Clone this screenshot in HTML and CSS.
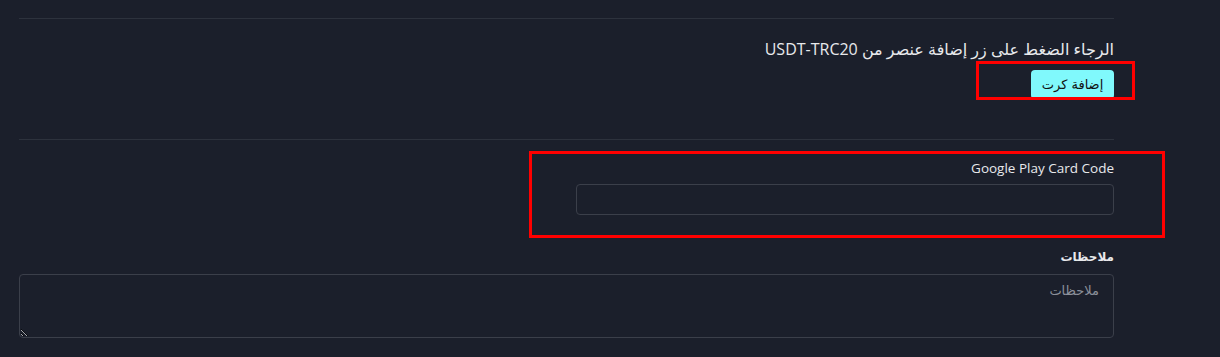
FILE: index.html
```html
<!DOCTYPE html>
<html lang="ar" dir="rtl">
<head>
  <meta charset="UTF-8">
  <title>إضافة كرت</title>
  <link rel="stylesheet" href="styles.css">
</head>
<body>
  <div class="wrap">
    <hr class="line">
    <div class="notice">
      <p class="notice-text">الرجاء الضغط على زر إضافة عنصر من USDT-TRC20</p>
      <div class="btn-mark">
        <button type="button" class="add-btn">إضافة كرت</button>
      </div>
    </div>
    <hr class="line">
    <div class="field-mark">
      <label class="label" for="code">Google Play Card Code</label>
      <input class="input" type="text" id="code">
    </div>
    <label class="label label-bold" for="notes">ملاحظات</label>
    <textarea class="textarea" id="notes" placeholder="ملاحظات"></textarea>
  </div>
</body>
</html>
```

FILE: styles.css
```css
*{
  padding: 0;
  margin: 0;
  box-sizing: border-box;
}
html, body{
  background: #1b1f2b;
}
body{
  font-family: "Open Sans", "DejaVu Sans", sans-serif;
  color: #e8e9ec;
  overflow: hidden;
}
.wrap{
  width: 1095px;
  margin-right: 106px;
  padding-top: 18px;
  display: flex;
  flex-direction: column;
  align-items: flex-start;
}
.line{
  width: 100%;
  border: 0;
  height: 1px;
  background: #2d323d;
}
.notice{
  padding-top: 18px;
  padding-bottom: 40px;
  display: flex;
  flex-direction: column;
  align-items: flex-start;
}
.notice-text{
  font-size: 16px;
  line-height: 24px;
}
.btn-mark{
  position: relative;
  margin-top: 9px;
}
.btn-mark::after{
  content: "";
  position: absolute;
  right: -21px;
  left: -55px;
  top: -9px;
  bottom: -1px;
  border: 3px solid #f00;
  pointer-events: none;
}
.add-btn{
  display: block;
  width: 83px;
  height: 29px;
  border: 0;
  border-radius: 4px;
  background: #80f9fc;
  color: #111;
  font-family: "DejaVu Sans", sans-serif;
  font-size: 13px;
}
.field-mark{
  position: relative;
  width: 538px;
  margin-top: 18px;
  display: flex;
  flex-direction: column;
  align-items: flex-start;
}
.field-mark::after{
  content: "";
  position: absolute;
  right: -51px;
  left: -47px;
  top: -7px;
  bottom: -23px;
  border: 3px solid #f00;
  pointer-events: none;
}
.label{
  display: block;
  font-size: 13.5px;
  line-height: 20px;
}
.label-bold{
  margin-top: 32px;
  font-family: "DejaVu Sans", sans-serif;
  font-weight: bold;
  font-size: 12px;
}
.input{
  margin-top: 6px;
  width: 100%;
  height: 31px;
  background: transparent;
  border: 1px solid #3b3f4a;
  border-radius: 4px;
}
.textarea{
  margin-top: 7px;
  width: 100%;
  height: 64px;
  background: transparent;
  border: 1px solid #3b3f4a;
  border-radius: 4px;
  padding: 8px 14px;
  font-family: "DejaVu Sans", sans-serif;
  font-size: 13px;
  color: #e8e9ec;
}
.textarea::placeholder{
  color: #8b909a;
}
```
